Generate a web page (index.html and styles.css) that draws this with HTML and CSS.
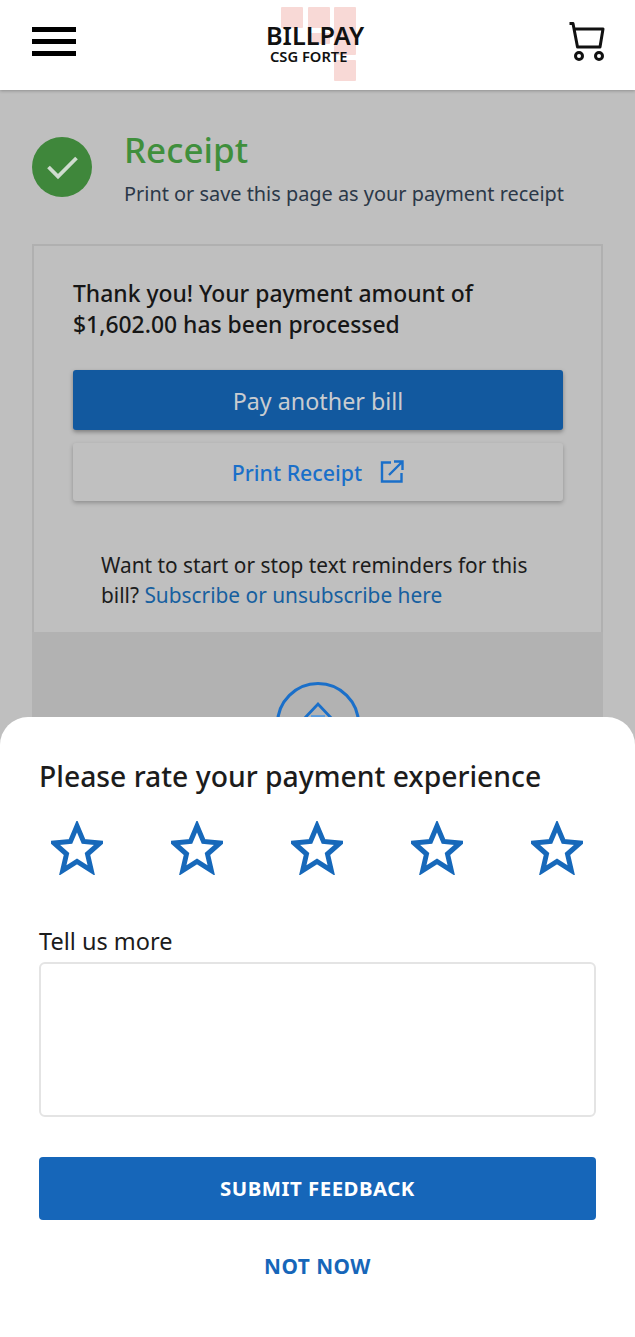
FILE: index.html
```html
<!DOCTYPE html>
<html lang="en">
<head>
  <meta charset="UTF-8" />
  <meta name="viewport" content="width=device-width, initial-scale=1.0"/>
  <title>Receipt</title>
  <link rel="stylesheet" href="styles.css">
</head>
<body>
<div class="screen">
  <header class="topbar">
    <div class="burger"><span></span><span></span><span></span></div>
    <div class="logo">
      <div class="logo-marks">
        <span></span><span></span><span></span>
        <span class="mark-inner"></span>
        <span class="mark-tail"></span>
      </div>
      <div class="logo-title">BILLPAY</div>
      <div class="logo-sub">CSG FORTE</div>
    </div>
    <svg class="cart" width="40" height="42" viewBox="0 0 40 42" fill="none" stroke="#111" stroke-width="3">
      <path d="M1.500 2.500H5L9.500 26H32L35 8H7" stroke-linejoin="round"/>
      <circle cx="11" cy="35" r="3.500"/>
      <circle cx="31" cy="35" r="3.500"/>
    </svg>
  </header>

  <main class="content">
    <div class="status">
      <div class="status-icon">
        <svg width="34" height="26" viewBox="0 0 34 26" fill="none" stroke="#cfdccf" stroke-width="3.800">
          <path d="M3.500 13L13 22.500 31.500 4"/>
        </svg>
      </div>
      <div>
        <h1>Receipt</h1>
        <p class="status-note">Print or save this page as your payment receipt</p>
      </div>
    </div>

    <section class="card">
      <p class="thanks">Thank you! Your payment amount of<br>$1,602.00 has been processed</p>
      <button class="btn-primary">Pay another bill</button>
      <button class="btn-print">
        Print Receipt
        <svg width="24" height="24" viewBox="0 0 24 24" fill="none" stroke="#1a6fc9" stroke-width="2.400">
          <path d="M11 2.500H2v19h19.500V13"/>
          <path d="M9 15L22 2M14 1.500h8.500V10"/>
        </svg>
      </button>
      <p class="reminder">Want to start or stop text reminders for this bill? <a href="#">Subscribe or unsubscribe here</a></p>
    </section>

    <section class="card-foot">
      <div class="up-circle">
        <svg width="40" height="30" viewBox="0 0 40 30" fill="none" stroke="#1a6fc9" stroke-width="2.800">
          <path d="M4 20L20 3l16 17"/>
          <path d="M13 15.500h14" stroke="#5b9bdc"/>
        </svg>
      </div>
    </section>
  </main>

  <section class="sheet">
    <h2>Please rate your payment experience</h2>
    <div class="stars">
      <svg class="star" width="52" height="54" viewBox="0 0 52 54"><path d="M26 5l6.500 15.500 16.500 1.500-12.500 11 3.800 16.500L26 40.500 11.700 49.500l3.800-16.500L3 22l16.500-1.500z"/></svg>
      <svg class="star" width="52" height="54" viewBox="0 0 52 54"><path d="M26 5l6.500 15.500 16.500 1.500-12.500 11 3.800 16.500L26 40.500 11.700 49.500l3.800-16.500L3 22l16.500-1.500z"/></svg>
      <svg class="star" width="52" height="54" viewBox="0 0 52 54"><path d="M26 5l6.500 15.500 16.500 1.500-12.500 11 3.800 16.500L26 40.500 11.700 49.500l3.800-16.500L3 22l16.500-1.500z"/></svg>
      <svg class="star" width="52" height="54" viewBox="0 0 52 54"><path d="M26 5l6.500 15.500 16.500 1.500-12.500 11 3.800 16.500L26 40.500 11.700 49.500l3.800-16.500L3 22l16.500-1.500z"/></svg>
      <svg class="star" width="52" height="54" viewBox="0 0 52 54"><path d="M26 5l6.500 15.500 16.500 1.500-12.500 11 3.800 16.500L26 40.500 11.700 49.500l3.800-16.500L3 22l16.500-1.500z"/></svg>
    </div>
    <label for="more">Tell us more</label>
    <textarea id="more"></textarea>
    <button class="btn-submit">SUBMIT FEEDBACK</button>
    <button class="btn-later">NOT NOW</button>
  </section>
</div>
</body>
</html>
```

FILE: styles.css
```css
* { box-sizing: border-box; }
body {
  margin: 0;
  font-family: "Noto Sans", "Open Sans", sans-serif;
  background: #bfbfbf;
  color: #1c1c1c;
}
button { font-family: inherit; cursor: pointer; }
.screen {
  position: relative;
  height: 1337px;
  overflow: hidden;
}

/* top bar */
.topbar {
  height: 90px;
  background: white;
  display: flex;
  align-items: center;
  justify-content: space-between;
  padding: 0 27px 0 32px;
  box-shadow: 0 1px 3px rgba(0,0,0,0.25);
  position: relative;
}
.burger {
  display: flex;
  flex-direction: column;
  gap: 7px;
  width: 44px;
  margin-bottom: 8px;
}
.burger span {
  display: block;
  height: 5px;
  background: black;
}
.logo {
  position: absolute;
  left: 266px;
  top: 21px;
  width: 104px;
  color: #111;
  white-space: nowrap;
}
.logo-marks {
  position: absolute;
  left: 15px;
  top: -14px;
  width: 75px;
  height: 75px;
}
.logo-marks span {
  position: absolute;
  top: 0;
  width: 22px;
  height: 21px;
  background: #f8d9d6;
  border-radius: 1px;
}
.logo-marks span:nth-child(1) { left: 0; }
.logo-marks span:nth-child(2) { left: 27px; }
.logo-marks span:nth-child(3) { left: 53px; height: 48px; }
.logo-marks .mark-inner { left: 27px; top: 26px; height: 11px; }
.logo-marks .mark-tail { left: 53px; top: 53px; height: 21px; }
.logo-title {
  position: relative;
  font-size: 25.200px;
  line-height: 28px;
  font-weight: 600;
}
.logo-sub {
  position: relative;
  font-size: 14.700px;
  line-height: 14px;
  font-weight: 600;
  margin-left: 4px;
}
.cart { margin-bottom: 6px; }

/* page under the sheet */
.content { padding: 0 32px; }
.status {
  display: flex;
  gap: 32px;
  padding-top: 36px;
  height: 154px;
}
.status-icon {
  width: 60px;
  height: 60px;
  margin-top: 11px;
  border-radius: 50%;
  background: #3f873b;
  display: flex;
  align-items: center;
  justify-content: center;
  flex: none;
}
h1 {
  margin: 0 0 6px;
  font-size: 35px;
  line-height: 48px;
  font-weight: 500;
  color: #3f8f3c;
}
.status-note {
  margin: 0;
  font-size: 19.900px;
  line-height: 28px;
  color: #2b3848;
}
.card {
  height: 388px;
  border: 2px solid #b0b0b0;
  border-bottom: none;
  padding: 32px 38px 0 39px;
}
.thanks {
  margin: 0 0 30px;
  font-size: 22.900px;
  line-height: 31px;
  font-weight: 500;
  color: #161616;
  white-space: nowrap;
}
.btn-primary, .btn-print {
  display: flex;
  align-items: center;
  justify-content: center;
  width: 100%;
  height: 60px;
  border: none;
  border-radius: 3px;
}
.btn-primary {
  background: #12599f;
  color: #c9ccd0;
  font-size: 23.300px;
  padding-top: 3px;
  box-shadow: 0 2px 4px rgba(0,0,0,0.35);
  margin-bottom: 13px;
}
.btn-print {
  height: 58px;
  gap: 18px;
  background: #c0c0c0;
  color: #1a6fc9;
  font-size: 21.300px;
  font-weight: 500;
  box-shadow: 0 2px 4px rgba(0,0,0,0.25);
}
.reminder {
  margin: 49px 0 0 28px;
  font-size: 20.850px;
  line-height: 30px;
  color: #1c1c1c;
}
.reminder a {
  color: #17609f;
  text-decoration: none;
}
.card-foot {
  height: 200px;
  background: #b2b2b2;
  padding-top: 50px;
}
.up-circle {
  width: 84px;
  height: 84px;
  margin: auto;
  border: 3px solid #1a6fc9;
  border-radius: 50%;
  display: flex;
  justify-content: center;
  padding-top: 16px;
}

/* rating sheet */
.sheet {
  position: absolute;
  left: 0;
  right: 0;
  bottom: 0;
  height: 620px;
  background: white;
  border-radius: 28px 28px 0 0;
  padding: 40px 39px 0;
}
h2 {
  margin: 0;
  font-size: 28.300px;
  line-height: 38px;
  font-weight: 500;
  color: #1c1c1c;
}
.stars {
  display: flex;
  justify-content: space-between;
  margin: 26px 13px 0 12px;
}
.star {
  fill: white;
  stroke: #1668ba;
  stroke-width: 5;
  display: block;
}
label {
  display: block;
  margin-top: 51px;
  font-size: 23.500px;
  line-height: 30px;
}
textarea {
  display: block;
  width: 100%;
  height: 155px;
  margin-top: 6px;
  border: 2px solid #e4e4e4;
  border-radius: 6px;
  resize: none;
}
.btn-submit {
  display: block;
  width: 100%;
  height: 63px;
  margin-top: 40px;
  padding-bottom: 3px;
  border: none;
  border-radius: 4px;
  background: #1666b9;
  color: white;
  font-size: 20.400px;
  font-weight: 700;
  letter-spacing: 0.5px;
}
.btn-later {
  display: block;
  margin: 29px auto 0;
  padding: 0;
  border: none;
  background: none;
  color: #1666b9;
  font-size: 20.800px;
  line-height: 34px;
  font-weight: 700;
  letter-spacing: 0.5px;
}
```
